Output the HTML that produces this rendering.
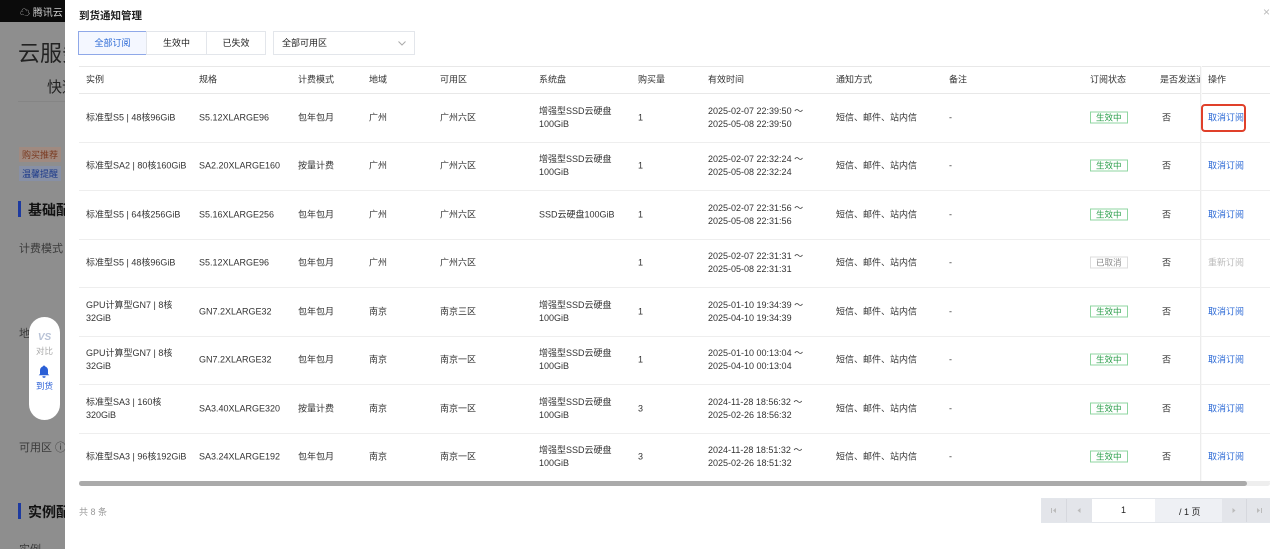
<!DOCTYPE html>
<html><head><meta charset="utf-8"><style>
*{margin:0;padding:0;box-sizing:border-box}
html,body{width:1280px;height:549px;overflow:hidden}
body{position:relative;background:#8e8e8e;font-family:"Liberation Sans","Noto Sans CJK SC",sans-serif;font-size:9px;color:#222}
.abs{position:absolute;white-space:nowrap}
.top{position:absolute;left:0;top:0;width:65px;height:22px;background:#0b0b0b;color:#ccc;font-size:10px}
.modal{position:absolute;left:65px;top:0;width:1215px;height:549px;background:#fff}
.tab{position:absolute;top:31px;height:24px;border:1px solid #e3e6eb;font-size:9px;text-align:center;line-height:22px;color:#222}
.hdr{position:absolute;left:14px;top:66px;width:1191px;height:28px;border-top:1px solid #e8e8e8;border-bottom:1px solid #e8e8e8;color:#333}
.row{position:absolute;left:14px;width:1191px;border-bottom:1px solid #eee;height:48.5px}
.c{position:absolute;top:50%;transform:translateY(-50%);line-height:13px;white-space:nowrap;color:#333}
.tag{border:1px solid #8fd6a0;color:#2a9e4a;padding:0 5px;line-height:12px;font-size:8.5px}
.tagx{border:1px solid #ddd;color:#888;padding:0 5px;line-height:12px;font-size:8.5px}
.lnk{color:#2e6bd6}
</style></head><body>
<div class="top"><span class="abs" style="left:20px;top:4px;">☁ 腾讯云</span></div>
<div class="abs" style="left:18px;top:36px;font-size:22px;color:#222">云服务</div>
<div class="abs" style="left:47px;top:76px;font-size:15px;color:#222">快速</div>
<div class="abs" style="left:18px;top:101px;width:47px;height:1px;background:#858585"></div>
<div class="abs" style="left:19px;top:147px;font-size:9px;background:#a08a80;color:#7a3a20;padding:1px 3px">购买推荐</div>
<div class="abs" style="left:19px;top:166px;font-size:9px;background:#8790a6;color:#1c3a8a;padding:1px 3px">温馨提醒</div>
<div class="abs" style="left:18px;top:201px;width:3px;height:16px;background:#1d3aa0"></div>
<div class="abs" style="left:28px;top:200px;font-size:14px;color:#111;font-weight:bold">基础配</div>
<div class="abs" style="left:19px;top:240px;font-size:11px;color:#3a3a3a">计费模式 ⓘ</div>
<div class="abs" style="left:19px;top:325px;font-size:11px;color:#3a3a3a">地</div>
<div class="abs" style="left:19px;top:439px;font-size:11px;color:#3a3a3a">可用区 ⓘ</div>
<div class="abs" style="left:18px;top:503px;width:3px;height:16px;background:#1d3aa0"></div>
<div class="abs" style="left:28px;top:502px;font-size:14px;color:#111;font-weight:bold">实例配</div>
<div class="abs" style="left:19px;top:541px;font-size:11px;color:#3a3a3a">实例</div>
<div class="abs" style="left:29px;top:317px;width:31px;height:103px;background:#fff;border-radius:16px;text-align:center">
<div style="margin-top:15px;font-weight:bold;font-style:italic;color:#b8c2d6;font-size:10px;line-height:12px">VS</div>
<div style="color:#aaa;font-size:8.5px;line-height:12px;margin-top:1px">对比</div>
<svg width="12" height="13" viewBox="0 0 12 13" style="margin-top:8px;display:block;margin-left:9px"><path d="M6 0.5c0.6 0 1 .4 1 .9C9 2 10 3.6 10 5.6V9l1.3 1.3H0.7L2 9V5.6C2 3.6 3 2 5 1.4c0-.5.4-.9 1-.9z" fill="#2a5fd6"/><path d="M4.4 11.2h3.2a1.6 1.6 0 0 1-3.2 0z" fill="#2a5fd6"/></svg>
<div style="color:#2a5fd6;font-size:8.5px;line-height:12px;margin-top:2px">到货</div>
</div>
<div class="modal">
<div class="abs" style="left:14px;top:8px;font-size:10.5px;font-weight:bold;color:#222">到货通知管理</div>
<div class="abs" style="right:10px;top:5px;font-size:12px;color:#bbb">×</div>
<div class="tab" style="left:13px;width:69px;border-color:#8fa8e8;color:#2e6bd6;background:#f4f7ff">全部订阅</div>
<div class="tab" style="left:81px;width:61px">生效中</div>
<div class="tab" style="left:141px;width:60px">已失效</div>
<div class="tab" style="left:208px;width:142px;text-align:left;padding-left:8px">全部可用区<svg class="abs" style="right:8px;top:9px" width="8" height="5" viewBox="0 0 8 5"><path d="M0.5 0.5L4 4L7.5 0.5" fill="none" stroke="#aaa"/></svg></div>
<div class="hdr">
<span class="c" style="left:7px">实例</span><span class="c" style="left:120px">规格</span><span class="c" style="left:219px">计费模式</span><span class="c" style="left:290px">地域</span><span class="c" style="left:361px">可用区</span><span class="c" style="left:460px">系统盘</span><span class="c" style="left:559px">购买量</span><span class="c" style="left:629px">有效时间</span><span class="c" style="left:757px">通知方式</span><span class="c" style="left:870px">备注</span><span class="c" style="left:1011px">订阅状态</span><span class="c" style="left:1081px;width:40px;overflow:hidden">是否发送通知</span><span class="c" style="left:1129px">操作</span>
</div>
<div class="abs" style="left:1135px;top:66px;width:2px;height:416px;background:linear-gradient(90deg,#e6e6e6,#fff)"></div>
<div id="rows"></div>
<div class="abs" style="left:14px;top:481px;width:1191px;height:5px;background:#eee;border-radius:3px"></div>
<div class="abs" style="left:14px;top:481px;width:1168px;height:5px;background:#aaa;border-radius:3px"></div>
<div class="abs" style="left:14px;top:505px;color:#999;font-size:9px">共 8 条</div>
<div class="abs" style="left:976px;top:498px;width:229px;height:25px;background:#eef0f4;border:1px solid #e3e6eb">
<div class="abs" style="left:0;top:0;width:50px;height:23px;background:#e3e5ea"></div>
<div class="abs" style="left:24px;top:0;width:1px;height:23px;background:#d6d8de"></div>
<svg class="abs" style="left:9px;top:9px" width="6" height="5"><path d="M0.5 0v5" stroke="#bbb"/><path d="M5 0L2 2.5L5 5z" fill="#bbb"/></svg>
<svg class="abs" style="left:35px;top:9px" width="4" height="5"><path d="M3.5 0L0.5 2.5L3.5 5z" fill="#bbb"/></svg>
<div class="abs" style="left:50px;top:0;width:63px;height:23px;background:#fff;text-align:center;line-height:23px">1</div>
<span class="abs" style="left:137px;top:6px">/ 1 页</span>
<div class="abs" style="left:180px;top:0;width:48px;height:23px;background:#e3e5ea"></div>
<div class="abs" style="left:204px;top:0;width:1px;height:23px;background:#d6d8de"></div>
<svg class="abs" style="left:190px;top:9px" width="4" height="5"><path d="M0.5 0L3.5 2.5L0.5 5z" fill="#bbb"/></svg>
<svg class="abs" style="left:214px;top:9px" width="6" height="5"><path d="M5.5 0v5" stroke="#bbb"/><path d="M1 0L4 2.5L1 5z" fill="#bbb"/></svg>
</div>
</div>
<div class="abs" style="left:1201px;top:104px;width:45px;height:28px;border:2px solid #e0402a;border-radius:4px"></div>
<script>
var d=[
["标准型S5 | 48核96GiB","S5.12XLARGE96","包年包月","广州","广州六区","增强型SSD云硬盘<br>100GiB","1","2025-02-07 22:39:50 ～<br>2025-05-08 22:39:50",1],
["标准型SA2 | 80核160GiB","SA2.20XLARGE160","按量计费","广州","广州六区","增强型SSD云硬盘<br>100GiB","1","2025-02-07 22:32:24 ～<br>2025-05-08 22:32:24",1],
["标准型S5 | 64核256GiB","S5.16XLARGE256","包年包月","广州","广州六区","SSD云硬盘100GiB","1","2025-02-07 22:31:56 ～<br>2025-05-08 22:31:56",1],
["标准型S5 | 48核96GiB","S5.12XLARGE96","包年包月","广州","广州六区","","1","2025-02-07 22:31:31 ～<br>2025-05-08 22:31:31",0],
["GPU计算型GN7 | 8核<br>32GiB","GN7.2XLARGE32","包年包月","南京","南京三区","增强型SSD云硬盘<br>100GiB","1","2025-01-10 19:34:39 ～<br>2025-04-10 19:34:39",1],
["GPU计算型GN7 | 8核<br>32GiB","GN7.2XLARGE32","包年包月","南京","南京一区","增强型SSD云硬盘<br>100GiB","1","2025-01-10 00:13:04 ～<br>2025-04-10 00:13:04",1],
["标准型SA3 | 160核<br>320GiB","SA3.40XLARGE320","按量计费","南京","南京一区","增强型SSD云硬盘<br>100GiB","3","2024-11-28 18:56:32 ～<br>2025-02-26 18:56:32",1],
["标准型SA3 | 96核192GiB","SA3.24XLARGE192","包年包月","南京","南京一区","增强型SSD云硬盘<br>100GiB","3","2024-11-28 18:51:32 ～<br>2025-02-26 18:51:32",1]];
var L=[7,120,219,290,361,460,559,629],h="";
d.forEach(function(r,i){h+='<div class="row" style="top:'+(94+i*48.5)+'px">';
for(var k=0;k<8;k++)h+='<span class="c" style="left:'+L[k]+'px">'+r[k]+'</span>';
h+='<span class="c" style="left:757px">短信、邮件、站内信</span><span class="c" style="left:870px">-</span>';
h+='<span class="c" style="left:1011px"><span class="'+(r[8]?'tag':'tagx')+'">'+(r[8]?'生效中':'已取消')+'</span></span>';
h+='<span class="c" style="left:1083px">否</span>';
h+='<span class="c '+(r[8]?'lnk':'')+'" style="left:1129px;'+(r[8]?'':'color:#bbb')+'">'+(r[8]?'取消订阅':'重新订阅')+'</span></div>';});
document.getElementById('rows').innerHTML=h;
</script>
</body></html>
